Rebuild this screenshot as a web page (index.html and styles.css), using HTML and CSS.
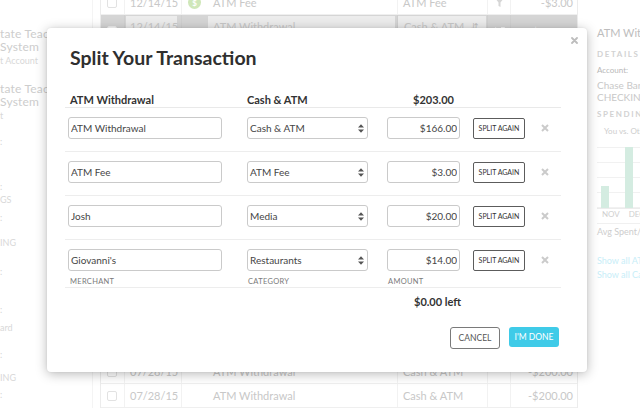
FILE: index.html
```html
<!DOCTYPE html>
<html lang="en">
<head>
<meta charset="utf-8">
<title>Split Your Transaction</title>
<link rel="stylesheet" href="styles.css">
</head>
<body>
<div class="page">
  <aside class="accounts">
    <div class="acct">
      <div class="acct-name">tate Teachers</div>
      <div class="acct-name">System</div>
      <div class="acct-sub">t Account</div>
    </div>
    <div class="acct acct-gap">
      <div class="acct-name">tate Teachers</div>
      <div class="acct-name">System</div>
      <div class="acct-sub">t</div>
    </div>
    <div class="mark m13">:</div>
    <div class="mark m33">:</div>
    <div class="tag">GS</div>
    <div class="mark m5">:</div>
    <div class="tag m12">ING</div>
    <div class="mark m16">:</div>
    <div class="mark m26">:</div>
    <div class="tag m5">ard</div>
    <div class="mark m14">:</div>
    <div class="tag m10">ING</div>
    <div class="mark m4">:</div>
  </aside>

  <main class="txns">
    <div class="row">
      <div class="cell c-check"><span class="checkbox"></span></div>
      <div class="cell c-date">12/14/15</div>
      <div class="cell c-desc"><span class="cat-dot">$</span>ATM Fee</div>
      <div class="cell c-cat">ATM Fee</div>
      <div class="cell c-icon">
        <svg width="9" height="9" viewBox="0 0 9 9"><path d="M0 0H9L5.5 4.5V9L3.5 8V4.5Z" fill="#d6d6d6"/></svg>
      </div>
      <div class="cell c-amt">-$3.00</div>
    </div>
    <div class="row row-edit">
      <div class="cell c-check"><span class="checkbox checkbox-edit"></span></div>
      <div class="cell c-date"><span class="edit-box date-box">12/14/15</span></div>
      <div class="cell c-desc"><span class="edit-box desc-box">ATM Withdrawal</span></div>
      <div class="cell c-cat"><span class="edit-box cat-box">Cash &amp; ATM <span class="mini-arrows">&#8693;</span></span></div>
      <div class="cell c-icon">
        <svg width="11" height="9" viewBox="0 0 11 9"><path d="M1 1L10 8M10 1L1 8M7 1H10V4M7 8H10V5" stroke="#fff" stroke-width="1.6" fill="none"/></svg>
      </div>
      <div class="cell c-amt amt-edit">$200.00</div>
    </div>
    <div class="row"></div><div class="row"></div><div class="row"></div><div class="row"></div>
    <div class="row"></div><div class="row"></div><div class="row"></div><div class="row"></div>
    <div class="row"></div><div class="row"></div><div class="row"></div><div class="row"></div>
    <div class="row"></div>
    <div class="row">
      <div class="cell c-check"><span class="checkbox"></span></div>
      <div class="cell c-date">07/28/15</div>
      <div class="cell c-desc c-desc-plain">ATM Withdrawal</div>
      <div class="cell c-cat">Cash &amp; ATM</div>
      <div class="cell c-icon"></div>
      <div class="cell c-amt">-$200.00</div>
    </div>
    <div class="row">
      <div class="cell c-check"><span class="checkbox"></span></div>
      <div class="cell c-date">07/28/15</div>
      <div class="cell c-desc c-desc-plain">ATM Withdrawal</div>
      <div class="cell c-cat">Cash &amp; ATM</div>
      <div class="cell c-icon"></div>
      <div class="cell c-amt">-$200.00</div>
    </div>
    <div class="row"></div>
  </main>

  <aside class="details">
    <div class="d-title">ATM Withdrawal</div>
    <div class="d-head">DETAILS</div>
    <div class="d-label">Account:</div>
    <div class="d-value">Chase Bank</div>
    <div class="d-value d-value-2">CHECKING</div>
    <div class="d-head d-head-2">SPENDING</div>
    <div class="legend"><span class="legend-swatch"></span>You vs. Others</div>
    <div class="chart">
      <span class="bar bar-nov"></span>
      <span class="bar bar-dec"></span>
    </div>
    <div class="axis"><span>NOV</span><span>DEC</span></div>
    <div class="avg">Avg Spent/Month</div>
    <div class="d-link d-link-1">Show all ATM Withdrawal</div>
    <div class="d-link">Show all Cash &amp; ATM</div>
  </aside>
</div>

<div class="modal" role="dialog" aria-label="Split Your Transaction">
  <button class="close" aria-label="Close">
    <svg width="7" height="7" viewBox="0 0 7 7"><path d="M1 1L6 6M6 1L1 6" stroke="#bdbdbd" stroke-width="1.8" stroke-linecap="round"/></svg>
  </button>
  <h1 class="title">Split Your Transaction</h1>

  <div class="cols split-head">
    <div class="h-merchant">ATM Withdrawal</div>
    <div>Cash &amp; ATM</div>
    <div class="h-amount">$203.00</div>
  </div>

  <div class="cols split-row">
    <input class="field merchant" value="ATM Withdrawal">
    <div class="field select"><span>Cash &amp; ATM</span><svg width="6" height="9" viewBox="0 0 6 9"><path d="M0 3.6L3 0.3L6 3.6ZM0 5.4L3 8.7L6 5.4Z" fill="#555"/></svg></div>
    <input class="field amount" value="$166.00">
    <button class="split-btn">SPLIT AGAIN</button>
    <button class="remove" aria-label="Remove"><svg width="8" height="8" viewBox="0 0 8 8"><path d="M1 1L7 7M7 1L1 7" stroke="#cbcbcb" stroke-width="2"/></svg></button>
  </div>

  <div class="cols split-row">
    <input class="field merchant" value="ATM Fee">
    <div class="field select"><span>ATM Fee</span><svg width="6" height="9" viewBox="0 0 6 9"><path d="M0 3.6L3 0.3L6 3.6ZM0 5.4L3 8.7L6 5.4Z" fill="#555"/></svg></div>
    <input class="field amount" value="$3.00">
    <button class="split-btn">SPLIT AGAIN</button>
    <button class="remove" aria-label="Remove"><svg width="8" height="8" viewBox="0 0 8 8"><path d="M1 1L7 7M7 1L1 7" stroke="#cbcbcb" stroke-width="2"/></svg></button>
  </div>

  <div class="cols split-row">
    <input class="field merchant" value="Josh">
    <div class="field select"><span>Media</span><svg width="6" height="9" viewBox="0 0 6 9"><path d="M0 3.6L3 0.3L6 3.6ZM0 5.4L3 8.7L6 5.4Z" fill="#555"/></svg></div>
    <input class="field amount" value="$20.00">
    <button class="split-btn">SPLIT AGAIN</button>
    <button class="remove" aria-label="Remove"><svg width="8" height="8" viewBox="0 0 8 8"><path d="M1 1L7 7M7 1L1 7" stroke="#cbcbcb" stroke-width="2"/></svg></button>
  </div>

  <div class="cols split-row split-row-last">
    <input class="field merchant" value="Giovanni's">
    <div class="field select"><span>Restaurants</span><svg width="6" height="9" viewBox="0 0 6 9"><path d="M0 3.6L3 0.3L6 3.6ZM0 5.4L3 8.7L6 5.4Z" fill="#555"/></svg></div>
    <input class="field amount" value="$14.00">
    <button class="split-btn">SPLIT AGAIN</button>
    <button class="remove" aria-label="Remove"><svg width="8" height="8" viewBox="0 0 8 8"><path d="M1 1L7 7M7 1L1 7" stroke="#cbcbcb" stroke-width="2"/></svg></button>
    <div class="col-label l-merchant">MERCHANT</div>
    <div class="col-label l-category">CATEGORY</div>
    <div class="col-label l-amount">AMOUNT</div>
  </div>

  <div class="remaining">$0.00 left</div>

  <div class="actions">
    <button class="btn btn-cancel">CANCEL</button>
    <button class="btn btn-done">I'M DONE</button>
  </div>
</div>
</body>
</html>
```

FILE: styles.css
```css
* { box-sizing: border-box; }

html, body {
  margin: 0;
  padding: 0;
}

body {
  width: 640px;
  height: 408px;
  overflow: hidden;
  position: relative;
  background: #ffffff;
  font-family: Lato, "Noto Sans", "Liberation Sans", sans-serif;
}

/* ---------- background page ---------- */
.page {
  display: flex;
  height: 408px;
  overflow: hidden;
}

.accounts {
  width: 93px;
  flex: none;
  padding-top: 27px;
  border-right: 1px solid #f4f4f4;
  white-space: nowrap;
  overflow: hidden;
  color: #cdcdcd;
}

.acct-name {
  font-size: 12px;
  line-height: 13px;
  height: 13px;
  letter-spacing: 0.2px;
}

.acct-sub {
  font-size: 9px;
  line-height: 15px;
  color: #d8d8d8;
}

.acct-gap { margin-top: 14px; }

.mark {
  font-size: 9px;
  line-height: 12px;
  color: #d4d4d4;
}

.tag {
  font-size: 9px;
  line-height: 14px;
  color: #d8d8d8;
}

.m4 { margin-top: 4px; }
.m5 { margin-top: 5px; }
.m10 { margin-top: 10px; }
.m12 { margin-top: 12px; }
.m13 { margin-top: 13px; }
.m14 { margin-top: 14px; }
.m16 { margin-top: 16px; }
.m26 { margin-top: 26px; }
.m33 { margin-top: 33px; }

.txns {
  width: 478px;
  flex: none;
  margin-left: 7px;
  margin-top: -9px;
  border-left: 1px solid #ececec;
  border-right: 1px solid #ececec;
}

.row {
  display: grid;
  grid-template-columns: 24px 57px 216px 90px 23px 1fr;
  height: 24px;
  border-bottom: 1px solid #efefef;
  font-size: 11px;
  color: #c8c8c8;
}

.cell {
  display: flex;
  align-items: center;
  border-right: 1px solid #f2f2f2;
  white-space: nowrap;
  overflow: hidden;
}

.cell:last-child { border-right: none; }

.c-check { justify-content: center; padding-right: 1px; }
.c-date { padding-left: 5px; }
.c-desc { padding-left: 6px; }
.c-desc-plain { padding-left: 31px; }
.c-cat { padding-left: 5px; }
.c-icon { justify-content: center; }
.c-amt { justify-content: flex-end; padding-right: 4px; }

.checkbox {
  width: 10px;
  height: 10px;
  border: 1px solid #e2e2e2;
  border-radius: 2px;
  background: #fff;
}

.cat-dot {
  width: 13px;
  height: 13px;
  border-radius: 50%;
  background: #cfe7b9;
  color: #fff;
  font-size: 8px;
  font-weight: 700;
  display: inline-flex;
  align-items: center;
  justify-content: center;
  margin-right: 12px;
}

.row-edit {
  height: 33px;
  background: #d5d5d5;
  border-bottom-color: #d0d0d0;
}

.row-edit .cell {
  align-items: flex-start;
  border-right-color: #cfcfcf;
}

.row-edit .c-desc { padding-left: 26px; padding-right: 2px; }
.row-edit .c-cat { padding-left: 0; padding-right: 1px; }
.row-edit .c-icon { align-items: center; }
.row-edit .c-amt { align-items: center; color: #f4f4f4; }
.row-edit .c-check { align-items: center; }

.checkbox-edit { border-color: #eeeeee; }

.edit-box {
  display: flex;
  align-items: center;
  height: 21px;
  margin-top: 1px;
  padding-left: 4px;
  background: #ececec;
  color: #c8c8c8;
  width: 100%;
}

.date-box { margin-left: -4px; }
.desc-box { padding-left: 5px; }
.cat-box { justify-content: space-between; padding: 0 7px 0 6px; }
.mini-arrows { font-size: 9px; color: #c0c0c0; }

.details {
  flex: 1;
  min-width: 0;
  padding: 26px 0 0 19px;
  white-space: nowrap;
  overflow: hidden;
  color: #c4c4c4;
}

.d-title { font-size: 11px; line-height: 14px; color: #bdbdbd; }

.d-head {
  margin-top: 8px;
  font-size: 8px;
  line-height: 12px;
  font-weight: 700;
  letter-spacing: 1.6px;
  color: #d2d2d2;
}

.d-head-2 { margin-top: 5px; }

.d-label { margin-top: 4px; font-size: 8px; line-height: 12px; color: #b8b8b8; }
.d-value { margin-top: 3px; font-size: 10px; line-height: 12px; color: #c8c8c8; }
.d-value-2 { margin-top: 0; }

.legend {
  margin-top: 5px;
  display: flex;
  align-items: center;
  font-size: 8px;
  line-height: 12px;
  color: #cdcdcd;
}

.legend-swatch {
  width: 8px;
  height: 8px;
  margin: 0 5px 0 2px;
  background: #d4ece1;
}

.chart {
  margin-top: 10px;
  height: 62px;
  display: flex;
  align-items: flex-end;
  gap: 16px;
  padding-left: 4px;
  border-bottom: 1px solid #ececec;
  background: repeating-linear-gradient(to bottom, #f1f1f1 0, #f1f1f1 1px, transparent 1px, transparent 15px);
}

.bar { width: 8px; background: #d4ece1; display: block; }
.bar-nov { height: 22px; }
.bar-dec { height: 61px; }

.axis {
  display: flex;
  gap: 9px;
  padding-left: 5px;
  font-size: 8px;
  line-height: 10px;
  color: #cfcfcf;
  padding-bottom: 4px;
  border-bottom: 1px solid #f0f0f0;
}

.avg { font-size: 9px; line-height: 12px; margin-top: 2px; color: #cdcdcd; }

.d-link { font-size: 9px; line-height: 14px; color: #c8eef8; }
.d-link-1 { margin-top: 16px; }

/* ---------- modal ---------- */
.modal {
  position: absolute;
  left: 47px;
  top: 28px;
  width: 540px;
  height: 344px;
  padding: 18px 26px 0 18px;
  background: #ffffff;
  border-radius: 4px;
  box-shadow: 0 2px 12px rgba(0, 0, 0, 0.28), 0 0 2px rgba(0, 0, 0, 0.08);
  color: #333;
}

.close {
  position: absolute;
  top: 8px;
  right: 8px;
  width: 9px;
  height: 9px;
  padding: 1px;
  border: none;
  background: none;
  display: flex;
}

.title {
  margin: 0;
  padding-left: 5px;
  font-size: 19.5px;
  line-height: 24px;
  font-weight: 700;
  color: #2f2f2f;
}

.cols {
  display: grid;
  grid-template-columns: 179px 140px 86px 52px 1fr;
  padding-left: 3px;
}

.split-head {
  margin-top: 23px;
  font-size: 11px;
  line-height: 14px;
  font-weight: 700;
  color: #333;
  border-bottom: 1px solid #e9e9e9;
}

.h-merchant { padding-left: 2px; }
.h-amount { padding-left: 26px; }

.split-row {
  padding-top: 9px;
  padding-bottom: 12px;
  align-items: center;
  border-bottom: 1px solid #ededed;
}

.split-row-last {
  padding-bottom: 0;
  row-gap: 6px;
}

.field {
  height: 22px;
  border: 1px solid #cacaca;
  border-radius: 3px;
  background: #fff;
  font-family: inherit;
  font-size: 10px;
  color: #454545;
  padding: 0 2px;
  outline: none;
}

.merchant { width: 154px; }

.select {
  width: 121px;
  display: flex;
  align-items: center;
  justify-content: space-between;
  padding: 0 2px 0 2px;
}

.select svg { margin-right: 1px; }

.amount {
  width: 73px;
  text-align: right;
  padding-right: 2px;
}

.split-btn {
  width: 52px;
  height: 21px;
  padding: 0;
  border: 1px solid #5c5c5c;
  border-radius: 2px;
  background: #fff;
  font-family: inherit;
  font-size: 7px;
  color: #333;
  letter-spacing: 0;
}

.remove {
  justify-self: start;
  margin-left: 16px;
  width: 8px;
  height: 8px;
  padding: 0;
  border: none;
  background: none;
  display: flex;
}

.col-label {
  font-size: 7.5px;
  line-height: 10px;
  color: #7a7a7a;
  letter-spacing: 0.3px;
}

.l-merchant { padding-left: 2px; grid-column: 1; }
.l-category { padding-left: 1px; grid-column: 2; }
.l-amount { padding-left: 1px; grid-column: 3; }

.remaining {
  margin-top: 7px;
  padding-left: 349px;
  font-size: 11px;
  line-height: 14px;
  font-weight: 700;
  color: #333;
}

.actions {
  margin-top: 18px;
  display: flex;
  justify-content: flex-end;
  align-items: flex-start;
  gap: 9px;
  padding-right: 2px;
}

.btn {
  width: 50px;
  padding: 0;
  font-family: inherit;
  font-size: 8.5px;
  border-radius: 3px;
}

.btn-cancel {
  height: 22px;
  border: 1px solid #7a7a7a;
  background: #fff;
  color: #555;
}

.btn-done {
  height: 20px;
  border: none;
  background: #3fcbe8;
  color: #fff;
}
```
